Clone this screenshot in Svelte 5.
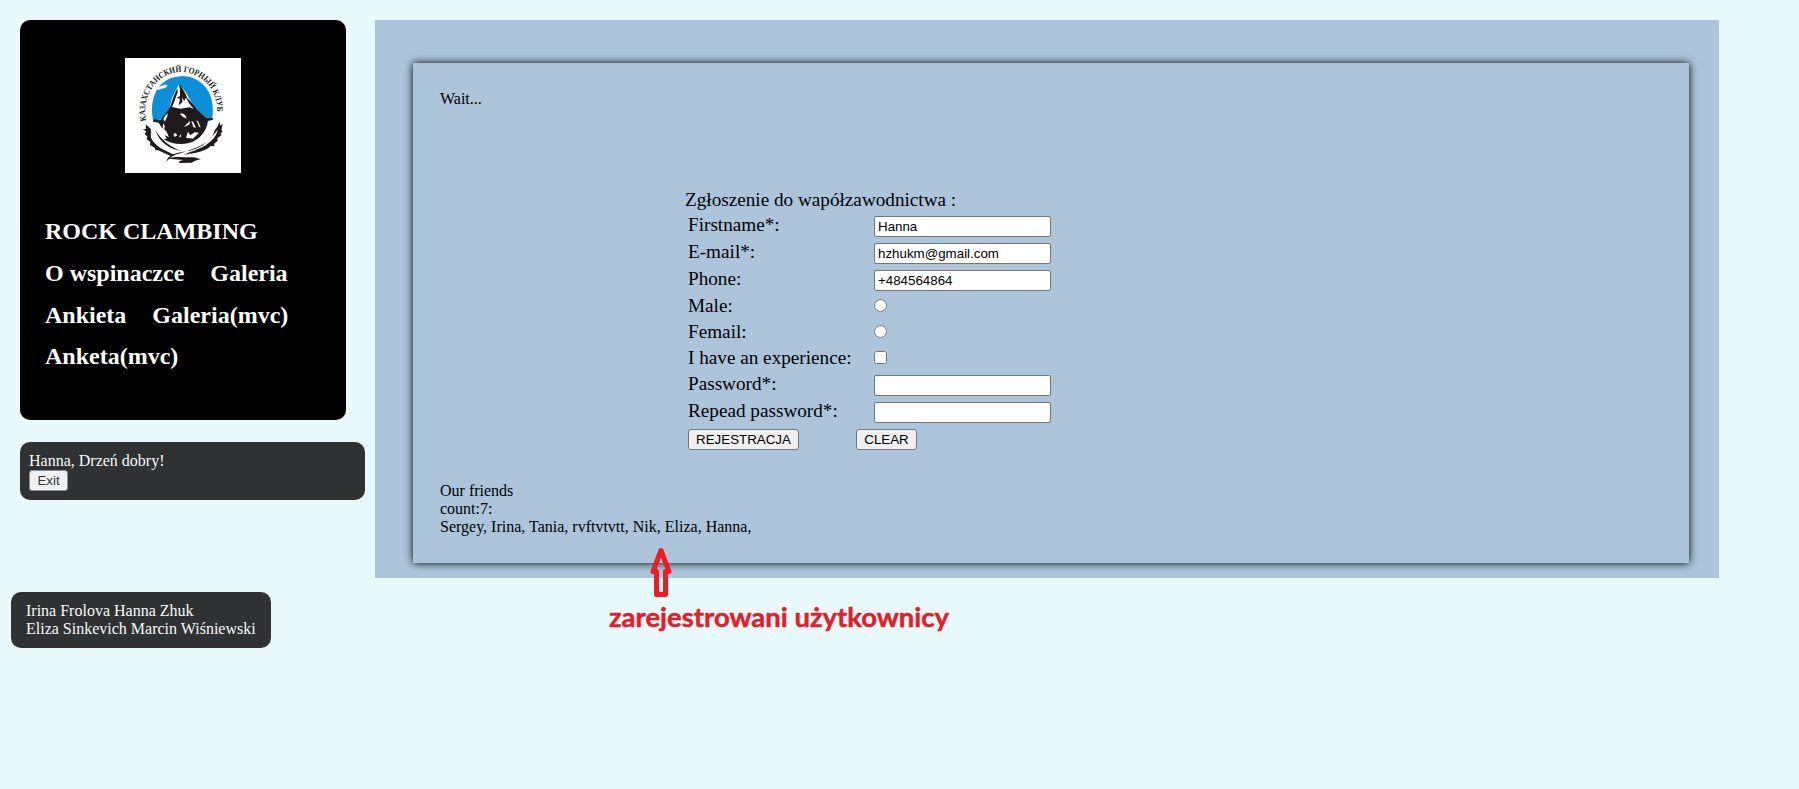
<script>
  const menu = [
    ['ROCK CLAMBING'],
    ['O wspinaczce', 'Galeria'],
    ['Ankieta', 'Galeria(mvc)'],
    ['Anketa(mvc)'],
  ];
  const fields = [
    { label: 'Firstname*:', type: 'text', value: 'Hanna' },
    { label: 'E-mail*:', type: 'text', value: 'hzhukm@gmail.com' },
    { label: 'Phone:', type: 'text', value: '+484564864' },
    { label: 'Male:', type: 'radio', value: '' },
    { label: 'Femail:', type: 'radio', value: '' },
    { label: 'I have an experience:', type: 'checkbox', value: '' },
    { label: 'Password*:', type: 'password', value: '' },
    { label: 'Repead password*:', type: 'password', value: '' },
  ];
</script>

<div class="page">
  <div class="columns">
    <aside>
      <nav>
        <svg class="logo" viewBox="30 24 348 345" width="116" height="115">
          <rect x="30" y="24" width="348" height="345" fill="#fff" />
          <defs><path id="ring" d="M94 212 A108 117 0 1 1 305 203" /></defs>
          <text class="ring-text"><textPath href="#ring" textLength="385" lengthAdjust="spacingAndGlyphs">КАЗАХСТАНСКИЙ ГОРНЫЙ КЛУБ</textPath></text>
          <path d="M116 216 C106 180 110 137 133 110 C150 88 177 78 205 78 C240 80 270 100 284 132 C295 157 295 185 291 211 L230 190 L133 209Z" fill="#0b8fd8" />
          <path d="M125 121 C132 108 149 101 157 105 C160 112 143 116 125 121Z" fill="#fff" />
          <path d="M192 103 L172 142 L163 174 L142 207 L150 226 L260 220 L292 207 L268 205 L242 177 L224 148 L212 126Z" fill="#fff" />
          <path d="M192 101 C205 119 211 128 217 145 C231 158 238 168 245 178 L273 204 L295 205 L294 209 L279 213 C275 242 254 271 222 279 C196 286 168 282 145 267 L155 266 L149 255 L162 262 L154 244 L139 231 L131 218 L114 215 L116 208 L136 211 L149 194 L166 169 L176 139 L187 115 L188 127 L176 160 L171 171 L196 176 L223 172 L236 176 L222 160 L213 143 L207 154 L202 141 L202 157 L191 166 L195 146 L185 144 L195 138 L195 122Z" fill="#201a1c" />
          <g fill="#fff">
            <path d="M151 197 L158 189 L157 199 L149 215 L145 207Z" />
            <path d="M195 192 C205 187 213 195 215 206 L204 201Z" />
            <path d="M210 227 L225 212 L223 224 L207 231Z" />
            <path d="M244 211 L249 213 L257 232 L253 231Z" />
            <path d="M229 213 L234 215 L243 234 L235 231Z" />
            <path d="M219 245 L226 256 L239 247 L252 248 L234 266 L213 263Z" />
            <path d="M145 219 L149 229 L148 241 L143 231Z" />
            <path d="M181 249 L187 256 L179 261 L175 252Z" />
            <path d="M196 253 L199 259 L192 263Z" />
          </g>
          <path d="M92 223 L107 236 L108 244 C118 278 148 304 181 316 L165 317 L128 300 L121 301 L119 293 L105 285 L106 276 L95 268 L97 260 L89 251 L94 245 L84 237 L93 237Z" fill="#201a1c" />
          <path d="M107 244 C119 269 136 288 165 306 C138 299 118 283 108 263Z" fill="#fff" />
          <path d="M121 241 C136 268 168 293 199 303 C165 298 133 278 121 241Z" fill="#201a1c" />
          <path d="M314 215 L316 227 L323 221 L319 240 L323 244 L316 252 L320 255 L307 265 L308 272 L297 282 L299 289 L287 288 C275 303 241 310 205 314 C230 304 271 294 284 270 C265 286 223 302 191 311 C173 315 166 323 154 335 C162 307 196 309 229 301 C264 290 293 271 299 241 L307 230Z" fill="#201a1c" />
          <path d="M308 240 C303 264 282 282 253 296 C277 277 291 260 308 240Z" fill="#fff" />
          <path d="M159 326 C181 316 219 324 245 321 L239 323 L258 327 L241 332 L230 338 L192 339 L194 333 L205 330Z" fill="#201a1c" />
        </svg>
        <div class="menu">
          {#each menu as row}
            <div class="menu-row">{#each row as item}<span>{item}</span>{/each}</div>
          {/each}
        </div>
      </nav>
      <div class="user">
        <div>Hanna, Drzeń dobry!</div>
        <button>Exit</button>
      </div>
    </aside>
    <main>
      <section>
        <p class="wait">Wait...</p>
        <form>
          <div class="title">Zgłoszenie do wapółzawodnictwa :</div>
          {#each fields as f}
            <label class="row" class:short={f.type === 'radio' || f.type === 'checkbox'}>
              <span>{f.label}</span>
              <input type={f.type} value={f.value} />
            </label>
          {/each}
          <div class="actions">
            <button type="button" class="register">REJESTRACJA</button>
            <button type="button" class="clear">CLEAR</button>
          </div>
        </form>
        <div class="friends">
          <div>Our friends</div>
          <div>count:7:</div>
          <div>Sergey, Irina, Tania, rvftvtvtt, Nik, Eliza, Hanna,</div>
        </div>
      </section>
    </main>
  </div>
  <footer>
    <div>Irina Frolova Hanna Zhuk</div>
    <div>Eliza Sinkevich Marcin Wiśniewski</div>
  </footer>
  <svg class="note" width="360" height="100" viewBox="0 0 360 100">
    <path d="M61 5.5 L69 26.5 H65.5 V49.5 H56.5 V26.5 H53 Z" fill="none" stroke="#ed1c24" stroke-width="5" stroke-linejoin="round" />
    <text x="9" y="82" textLength="340" lengthAdjust="spacingAndGlyphs">zarejestrowani użytkownicy</text>
  </svg>
</div>

<style>
  :global(body) { background: #e9faff; }
  .page {
    position: relative;
    box-sizing: border-box;
    height: 789px;
    overflow: hidden;
    padding-top: 20px;
    background: #e9faff;
    font: 16px/18px "Liberation Serif", serif;
    color: #000;
  }
  .columns { display: flex; padding-left: 20px; }
  aside { width: 355px; }
  nav {
    box-sizing: border-box;
    width: 326px;
    height: 400px;
    padding: 38px 25px 0;
    border-radius: 10px;
    background: #000;
    color: #fff;
  }
  .logo { display: block; margin: 0 auto; }
  .ring-text { font: bold 26px "Liberation Serif", serif; fill: #201a1c; }
  .menu { padding-top: 37px; font-size: 24px; font-weight: bold; }
  .menu-row { display: flex; gap: 26px; height: 41.8px; line-height: 42px; }
  .user {
    box-sizing: border-box;
    width: 345px;
    height: 58px;
    margin-top: 22px;
    padding: 10px 9px 0;
    border-radius: 10px;
    background: #2e3233;
    color: #f8fafa;
  }
  button {
    box-sizing: border-box;
    display: block;
    height: 21px;
    padding: 0;
    border: 1px solid #767676;
    border-radius: 3px;
    background: #efefef;
    color: #000;
    font: 13.333px/17px "Liberation Sans", sans-serif;
    text-align: center;
  }
  .user button { width: 39px; background: #eef1f2; color: #303435; border-color: #8b8f90; }
  main {
    box-sizing: border-box;
    width: 1344px;
    height: 558px;
    padding: 43px 30px 0 38px;
    background: #acc5db;
  }
  section {
    box-sizing: border-box;
    height: 500px;
    padding: 27px;
    box-shadow: 0 0 8px #000;
    background: #acc5db;
  }
  .wait { height: 18px; margin: 0; }
  form { padding: 81px 0 0 245px; font-size: 19.2px; line-height: 22px; }
  .title { height: 25px; }
  .row {
    display: grid;
    grid-template-columns: 186px 177px;
    height: 25px;
    margin: 0 0 2px 3px;
  }
  .row.short { height: 24px; }
  input { box-sizing: border-box; margin: 2px 0 0; }
  .row:not(.short) input {
    width: 177px;
    height: 21px;
    padding: 1px 3px;
    border: 1px solid #767676;
    border-radius: 2px;
    background: #fff;
    color: #000;
    font: 13.333px "Liberation Sans", sans-serif;
  }
  .short input { width: 13px; height: 13px; margin-top: 4px; }
  .actions { display: flex; gap: 57px; padding: 2px 0 0 3px; }
  .register { width: 111px; }
  .clear { width: 61px; }
  .friends { padding-top: 32px; }
  footer {
    box-sizing: border-box;
    width: 260px;
    height: 56px;
    margin: 14px 0 0 11px;
    padding: 10px 15px;
    border-radius: 10px;
    background: #2e3233;
    color: #f8fafa;
    white-space: nowrap;
  }
  .note { position: absolute; left: 600px; top: 545px; }
  .note text { font: bold 27px Lato, sans-serif; fill: #e31e26; stroke: #e31e26; stroke-width: 0.5px; }
</style>
